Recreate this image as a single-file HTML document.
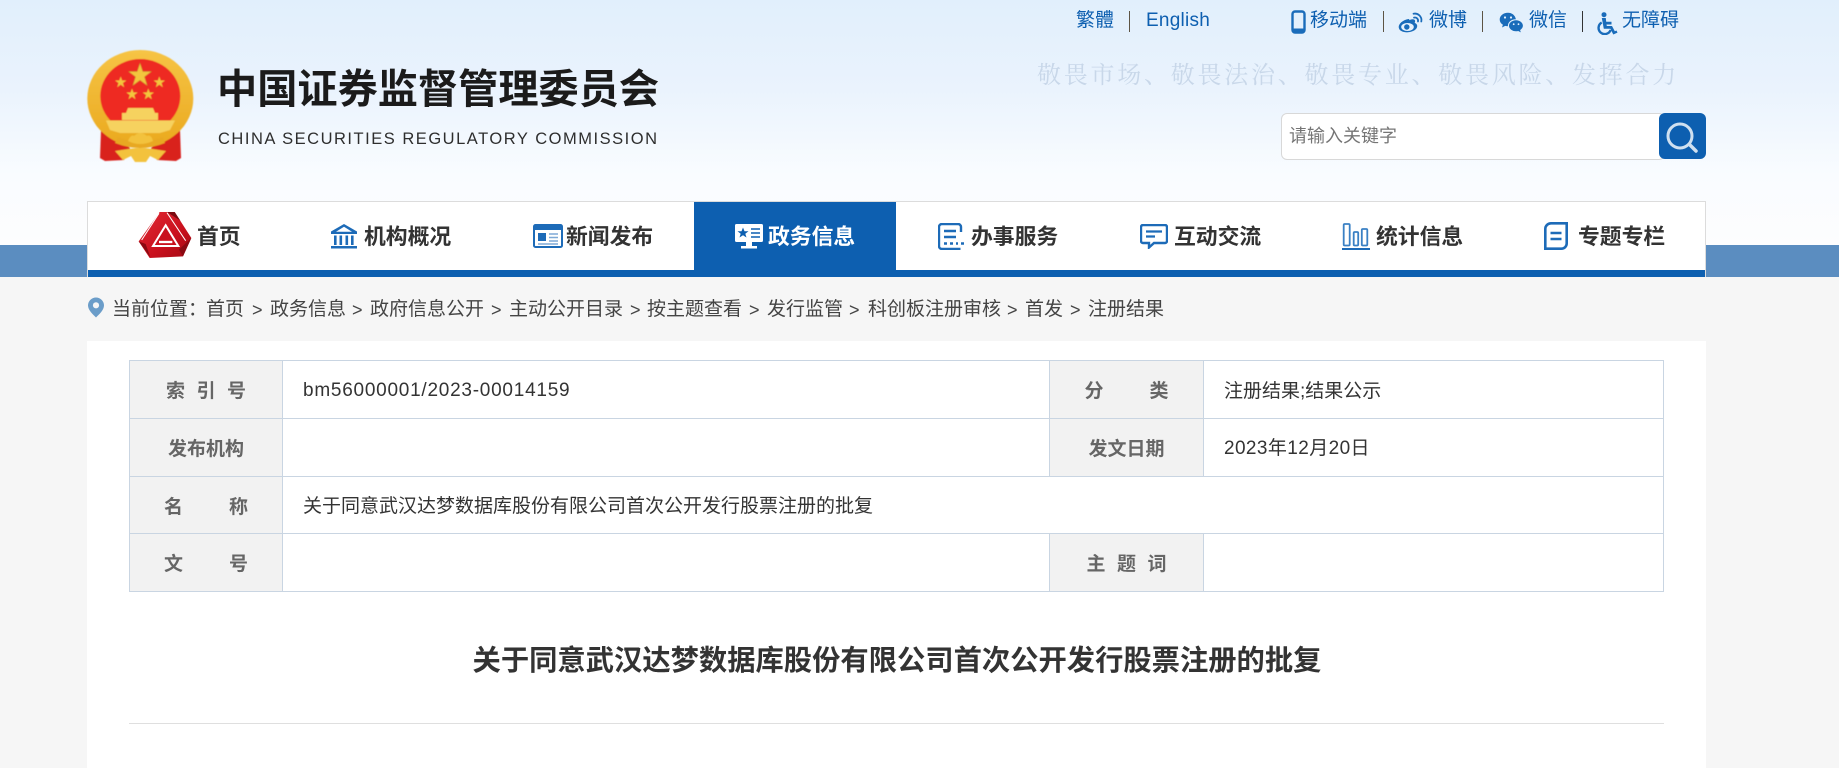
<!DOCTYPE html>
<html lang="zh-CN">
<head>
<meta charset="utf-8">
<title>关于同意武汉达梦数据库股份有限公司首次公开发行股票注册的批复</title>
<style>
html,body{margin:0;padding:0;}
body{width:1839px;height:768px;overflow:hidden;position:relative;background:#f6f6f6;font-family:"Liberation Sans","Noto Sans CJK SC",sans-serif;color:#333;}
.a{position:absolute;white-space:nowrap;}
#hd{left:0;top:0;width:1839px;height:245px;background:linear-gradient(#e1effc 0,#eaf3fd 90px,#f9fcff 175px,#fdfdfe 245px);}
#band{left:0;top:245px;width:1839px;height:32px;background:#5b8dc0;}
.tb{font-size:19px;line-height:24px;top:9px;color:#0d5fb0;}
.dv{top:11px;width:1px;height:21px;background:#5d5444;}
.nav{font-size:21.8px;line-height:30px;top:222px;font-weight:700;color:#333;letter-spacing:0;}
.bc{font-size:19px;line-height:26px;top:297px;color:#444;}
.bs{font-size:18px;line-height:26px;top:297px;color:#444;font-family:"Liberation Sans",sans-serif;}
table{position:absolute;left:129px;top:360px;width:1535px;border-collapse:collapse;table-layout:fixed;background:#fff;}
td{border:1px solid #c9d5e2;font-size:19px;color:#333;padding:0 0 0 20px;white-space:nowrap;}
td.l{background:#f2f2f2;color:#666;font-weight:700;padding:0;}
td.l div{display:flex;justify-content:space-between;margin:0 auto;}
</style>
</head>
<body>
<div class="a" id="hd"></div>
<div class="a" id="band"></div>

<!-- emblem -->
<svg class="a" style="left:85px;top:48px" width="112" height="116" viewBox="85 48 112 116">
<defs>
<linearGradient id="g" x1="0" y1="0" x2="0" y2="1"><stop offset="0" stop-color="#f6c445"/><stop offset="1" stop-color="#eaa91f"/></linearGradient>
<filter id="b"><feGaussianBlur stdDeviation="0.5"/></filter>
</defs>
<g filter="url(#b)">
<path d="M101 130L112 134L130 148L124 160L105 161L100 158Z M180 130L169 134L151 148L157 160L176 161L181 158Z" fill="#d9201e"/>
<ellipse cx="140.300" cy="98.500" rx="53" ry="48.500" fill="url(#g)"/>
<ellipse cx="140.300" cy="96" rx="40" ry="37" fill="#ee2c24"/>
<path d="M140 63L142.800 71.500L151.500 71.500L144.500 76.800L147.200 85.500L140 80.200L132.800 85.500L135.500 76.800L128.500 71.500L137.200 71.500Z" fill="#f3c63e" stroke="#b4822a" stroke-width=".4"/>
<path d="M120.700 76.500L122.100 80.500L126.300 80.500L122.900 83L124.200 87.200L120.700 84.600L117.200 87.200L118.500 83L115.100 80.500L119.300 80.500Z" fill="#f3c63e"/>
<path d="M159.300 76.500L160.700 80.500L164.900 80.500L161.500 83L162.800 87.200L159.300 84.600L155.800 87.200L157.100 83L153.700 80.500L157.900 80.500Z" fill="#f3c63e"/>
<path d="M132 88.500L133.400 92.500L137.600 92.500L134.200 95L135.500 99.200L132 96.600L128.500 99.200L129.800 95L126.400 92.500L130.600 92.500Z" fill="#f3c63e"/>
<path d="M148.300 88.500L149.700 92.500L153.900 92.500L150.500 95L151.800 99.200L148.300 96.600L144.800 99.200L146.100 95L142.700 92.500L146.900 92.500Z" fill="#f3c63e"/>
<path d="M128 108H153L155 113H158V120H122V113H126Z" fill="#f6d25f"/>
<path d="M106 120.500H175L170 130L160 133H120L110 130Z" fill="#f6d25f"/>
<path d="M118 137Q140 146 163 137L165 143Q140 153 115 143Z" fill="#e8a820"/>
<path d="M128 141Q131 134 134 136Q140 130 147 136Q151 134 153 141Q140 147 128 141Z" fill="#f3c23d"/>
<path d="M115 151L128 149L136 148L145 148L153 149L166 151L158 160L150 156L146 162L135 162L131 156L123 160Z" fill="#f3c23d"/>
</g>
</svg>

<div class="a" style="left:217px;top:61px;font-size:40.200px;line-height:58px;font-weight:700;color:#1b1b1b;letter-spacing:0;">中国证券监督管理委员会</div>
<svg class="a" style="left:217px;top:126px" width="445" height="24"><text x="1" y="18" textLength="439" lengthAdjust="spacing" font-family="Liberation Sans" font-size="16.500" fill="#2e2e2e">CHINA SECURITIES REGULATORY COMMISSION</text></svg>

<!-- top links -->
<span class="a tb" style="left:1076px">繁體</span>
<i class="a dv" style="left:1129px"></i>
<span class="a tb" style="left:1146px;letter-spacing:.25px">English</span>

<svg class="a" style="left:1291px;top:10px" width="15" height="24" viewBox="0 0 15 24"><rect x="1.500" y="1.500" width="12" height="21" rx="2.500" fill="none" stroke="#1a6cba" stroke-width="2.400"/><path d="M1.500 18.500H13.500V21A1.500 1.500 0 0 1 12 22.500H3A1.500 1.500 0 0 1 1.500 21Z" fill="#1a6cba"/></svg>
<span class="a tb" style="left:1310px">移动端</span>
<i class="a dv" style="left:1383px"></i>

<svg class="a" style="left:1398px;top:12px" width="26" height="21" viewBox="0 0 26 21"><path d="M10.500 7C4.500 8 .5 12 .7 15.200 1 18.700 5 20.500 10 20.300 15.500 20 19.500 17 19.200 13.800 19 12 17.800 11.300 16.600 11 17.400 9.500 17.300 8.200 16.300 7.600 15 6.800 12.800 7.300 11.300 8.300 11.500 7.500 11.300 6.900 10.500 7Z" fill="#1a6cba"/><ellipse cx="9.500" cy="15" rx="6.300" ry="4" fill="#e6f1fc"/><circle cx="8.800" cy="15" r="2.700" fill="#1a6cba"/><path d="M15.500 1.700C19.800 .8 24.300 4.500 23.300 9.500M16 5.600C18.500 5 20.500 7 20 9.500" fill="none" stroke="#1a6cba" stroke-width="1.800" stroke-linecap="round"/></svg>
<span class="a tb" style="left:1429px">微博</span>
<i class="a dv" style="left:1482px"></i>

<svg class="a" style="left:1499px;top:12px" width="25" height="21" viewBox="0 0 25 21"><path d="M9 .8C4.300 .8.700 3.800.7 7.500c0 2.200 1.200 4 3.200 5.300L3 15.500l3.200-1.600c.9.200 1.700.3 2.700.3-.3-3.900 3.300-7 8-7C16 3.100 12.800.8 9 .8Z" fill="#1a6cba"/><path d="M17 8.300c-3.900 0-7 2.500-7 5.500s3.100 5.500 7 5.500c.8 0 1.500-.1 2.200-.3l2.600 1.400-.7-2.300c1.700-1.100 2.800-2.600 2.800-4.300 0-3-3-5.500-6.900-5.500Z" fill="#1a6cba"/><circle cx="6" cy="5.500" r="1.100" fill="#e6f1fc"/><circle cx="12" cy="5.500" r="1.100" fill="#e6f1fc"/><circle cx="14.700" cy="12.200" r=".9" fill="#e6f1fc"/><circle cx="19.500" cy="12.200" r=".9" fill="#e6f1fc"/></svg>
<span class="a tb" style="left:1529px">微信</span>
<i class="a dv" style="left:1582px;background:#333"></i>

<svg class="a" style="left:1597px;top:12px" width="21" height="23" viewBox="0 0 21 23"><circle cx="7" cy="2.700" r="2.500" fill="#1a6cba"/><path d="M4.800 6H8.800L9.200 9.800H14.500V12.500H9.500L9.800 14H15L17.800 19.300L19.500 18.500L20.500 20.600L16.300 22.500L13.300 16.800H6.800Z" fill="#1a6cba"/><path d="M4.700 10.500A6.200 6.200 0 1 0 13.600 18" fill="none" stroke="#1a6cba" stroke-width="2.400"/></svg>
<span class="a tb" style="left:1622px">无障碍</span>

<!-- slogan -->
<div class="a" style="left:1037px;top:55px;font-family:'Noto Serif CJK SC','Liberation Serif',serif;font-size:24px;line-height:36px;letter-spacing:2.750px;color:#c8d7e9;">敬畏市场、敬畏法治、敬畏专业、敬畏风险、发挥合力</div>

<!-- search -->
<div class="a" style="left:1281px;top:113px;width:384px;height:47px;box-sizing:border-box;background:#fff;border:1px solid #d8d8d8;border-radius:6px;"></div>
<div class="a" style="left:1289px;top:123px;font-size:18px;line-height:26px;color:#757575;">请输入关键字</div>
<div class="a" style="left:1659px;top:113px;width:47px;height:46px;background:#0d5fb0;border-radius:6px;"></div>
<svg class="a" style="left:1659px;top:113px" width="47" height="46" viewBox="0 0 47 46"><circle cx="21" cy="23" r="12" fill="none" stroke="#cfe0f0" stroke-width="3"/><path d="M31.500 32.500L37 38" stroke="#cfe0f0" stroke-width="3.500" stroke-linecap="round"/></svg>

<!-- nav -->
<div class="a" style="left:87px;top:201px;width:1619px;height:76px;box-sizing:border-box;background:#fff;border:1px solid #dcdcdc;border-bottom:0;"></div>
<div class="a" style="left:88px;top:270px;width:1617px;height:7px;background:#0d5fb0;"></div>
<div class="a" style="left:694px;top:202px;width:202px;height:68px;background:#0d5fb0;"></div>

<svg class="a" style="left:138px;top:212px" width="54" height="46" viewBox="27 22 158 138">
<defs><linearGradient id="r" x1="0" y1="0" x2="1" y2="1"><stop offset="0" stop-color="#e22a34"/><stop offset=".6" stop-color="#c9101d"/><stop offset="1" stop-color="#a20a14"/></linearGradient></defs>
<path d="M90 22L135 22L185 100L160 155L60 160L27 110Z" fill="url(#r)"/>
<path d="M112 22L135 22L152 48Z" fill="#7a0a10"/>
<path d="M27 110L48 118L62 158Z" fill="#8a0a12"/>
<path d="M185 100L160 155L148 135Z" fill="#8a0a12"/>
<path d="M108 62L146 124L70 124Z" fill="#c9101d" stroke="#fff" stroke-width="6"/>
<path d="M88 112H128" stroke="#fff" stroke-width="7"/>
<path d="M112 24L168 108M36 106L88 26" stroke="#fff" stroke-width="3" fill="none"/>
</svg>
<span class="a nav" style="left:197px">首页</span>

<svg class="a" style="left:330px;top:224px" width="28" height="25" viewBox="0 0 28 25" fill="#1d6bb8"><path d="M14 0L27 7.500V10H1V7.500ZM14 2.800L6 7.800H22Z" fill-rule="evenodd"/><rect x="4" y="11.500" width="2.600" height="9.500"/><rect x="9.500" y="11.500" width="2.600" height="9.500"/><rect x="15.500" y="11.500" width="2.600" height="9.500"/><rect x="21" y="11.500" width="2.600" height="9.500"/><rect x="1" y="22" width="26" height="2.500"/></svg>
<span class="a nav" style="left:364px">机构概况</span>

<svg class="a" style="left:533px;top:224px" width="30" height="24" viewBox="0 0 30 24"><rect x="1" y="1" width="28" height="22" rx="1.500" fill="#fff" stroke="#1d6bb8" stroke-width="2"/><rect x="1" y="1" width="28" height="5" fill="#1d6bb8"/><rect x="5" y="9" width="8" height="8" fill="#1d6bb8"/><path d="M16 10H25M16 13.500H25M16 17H25M5 20H25" stroke="#7fa9d6" stroke-width="1.500"/></svg>
<span class="a nav" style="left:566px">新闻发布</span>

<svg class="a" style="left:735px;top:224px" width="28" height="25" viewBox="0 0 28 25"><rect x="0" y="0" width="28" height="18" rx="1.500" fill="#fff"/><rect x="2" y="2" width="24" height="14" fill="#fff"/><path d="M8 3.500L9.500 7.300H13.500L10.300 9.700L11.500 13.500L8 11.200L4.500 13.500L5.700 9.700L2.500 7.300H6.500Z" fill="#0d5fb0"/><path d="M16 5H25M16 9H25M16 13H25" stroke="#0d5fb0" stroke-width="1.600"/><rect x="11" y="18" width="6" height="4" fill="#fff"/><rect x="6" y="22" width="16" height="2.500" fill="#fff"/></svg>
<span class="a nav" style="left:768px;color:#fff">政务信息</span>

<svg class="a" style="left:938px;top:223px" width="28" height="27" viewBox="0 0 28 27"><path d="M23 9V4A3 3 0 0 0 20 1H4A3 3 0 0 0 1 4V23A3 3 0 0 0 4 26H22.500" fill="none" stroke="#1d6bb8" stroke-width="2.400"/><path d="M6 8H18M6 14H18" stroke="#1d6bb8" stroke-width="2.400"/><path d="M6 20.500H9M12 20.500H15M18 20.500H20M23 20.500H26" stroke="#1d6bb8" stroke-width="2.600"/></svg>
<span class="a nav" style="left:971px">办事服务</span>

<svg class="a" style="left:1140px;top:224px" width="28" height="25" viewBox="0 0 28 25"><path d="M3 1H25A2 2 0 0 1 27 3V17A2 2 0 0 1 25 19H14L9 23.500V19H3A2 2 0 0 1 1 17V3A2 2 0 0 1 3 1Z" fill="none" stroke="#1d6bb8" stroke-width="2.400"/><path d="M6 7.500H22M6 12.500H15" stroke="#1d6bb8" stroke-width="2.200"/></svg>
<span class="a nav" style="left:1174px">互动交流</span>

<svg class="a" style="left:1342px;top:223px" width="28" height="27" viewBox="0 0 28 27"><rect x="1.700" y="1" width="6" height="21.500" rx="1" fill="none" stroke="#3a80c4" stroke-width="1.800"/><rect x="11.700" y="9" width="4.500" height="13.500" rx="1" fill="none" stroke="#3a80c4" stroke-width="1.800"/><rect x="19.800" y="6" width="5.500" height="16.500" rx="1" fill="none" stroke="#3a80c4" stroke-width="1.800"/><rect x="0" y="25" width="28" height="2" fill="#1d6bb8"/></svg>
<span class="a nav" style="left:1376px">统计信息</span>

<svg class="a" style="left:1544px;top:222px" width="24" height="28" viewBox="0 0 24 28"><path d="M7 1.300H22.700V21.500A5.300 5.300 0 0 1 17.400 26.700H1.300V7A5.700 5.700 0 0 1 7 1.300Z" fill="#fff" stroke="#1d6bb8" stroke-width="2.600"/><path d="M6.500 11H17.500M6.500 17H17.500" stroke="#1d6bb8" stroke-width="2.600"/></svg>
<span class="a nav" style="left:1578px">专题专栏</span>

<!-- breadcrumb -->
<svg class="a" style="left:87px;top:297px" width="18" height="21" viewBox="0 0 18 21"><path d="M9 0.500A8 8 0 0 1 17 8.500C17 13 12 17.500 9 20.500C6 17.500 1 13 1 8.500A8 8 0 0 1 9 .5Z" fill="#6b9dc9"/><circle cx="9" cy="8.300" r="3.100" fill="#f6f6f6"/></svg>
<span class="a bc" style="left:112px">当前位置：</span>
<span class="a bc" style="left:206px">首页</span><span class="a bs" style="left:252px">&gt;</span>
<span class="a bc" style="left:270px">政务信息</span><span class="a bs" style="left:352px">&gt;</span>
<span class="a bc" style="left:370px">政府信息公开</span><span class="a bs" style="left:491px">&gt;</span>
<span class="a bc" style="left:509px">主动公开目录</span><span class="a bs" style="left:630px">&gt;</span>
<span class="a bc" style="left:647px">按主题查看</span><span class="a bs" style="left:749px">&gt;</span>
<span class="a bc" style="left:767px">发行监管</span><span class="a bs" style="left:849px">&gt;</span>
<span class="a bc" style="left:868px">科创板注册审核</span><span class="a bs" style="left:1007px">&gt;</span>
<span class="a bc" style="left:1025px">首发</span><span class="a bs" style="left:1070px">&gt;</span>
<span class="a bc" style="left:1088px">注册结果</span>

<!-- main -->
<div class="a" style="left:87px;top:341px;width:1619px;height:427px;background:#fff;"></div>
<table>
<colgroup><col style="width:153px"><col style="width:767px"><col style="width:154px"><col></colgroup>
<tr style="height:58px"><td class="l"><div style="width:80px"><span>索</span><span>引</span><span>号</span></div></td><td style="letter-spacing:.75px;padding-top:2px">bm56000001/2023-00014159</td><td class="l"><div style="width:84px"><span>分</span><span>类</span></div></td><td>注册结果;结果公示</td></tr>
<tr style="height:58px"><td class="l"><div style="width:76px">发布机构</div></td><td></td><td class="l"><div style="width:76px">发文日期</div></td><td style="padding-bottom:2px;letter-spacing:.4px">2023年12月20日</td></tr>
<tr style="height:57px"><td class="l"><div style="width:84px"><span>名</span><span>称</span></div></td><td colspan="3" style="padding-bottom:2px">关于同意武汉达梦数据库股份有限公司首次公开发行股票注册的批复</td></tr>
<tr style="height:58px"><td class="l"><div style="width:84px"><span>文</span><span>号</span></div></td><td></td><td class="l"><div style="width:80px"><span>主</span><span>题</span><span>词</span></div></td><td></td></tr>
</table>

<div class="a" style="left:472px;top:639px;width:850px;text-align:center;font-size:28.300px;line-height:42px;font-weight:700;color:#333;">关于同意武汉达梦数据库股份有限公司首次公开发行股票注册的批复</div>
<div class="a" style="left:129px;top:723px;width:1535px;height:1px;background:#dfdfdf;"></div>
</body>
</html>
